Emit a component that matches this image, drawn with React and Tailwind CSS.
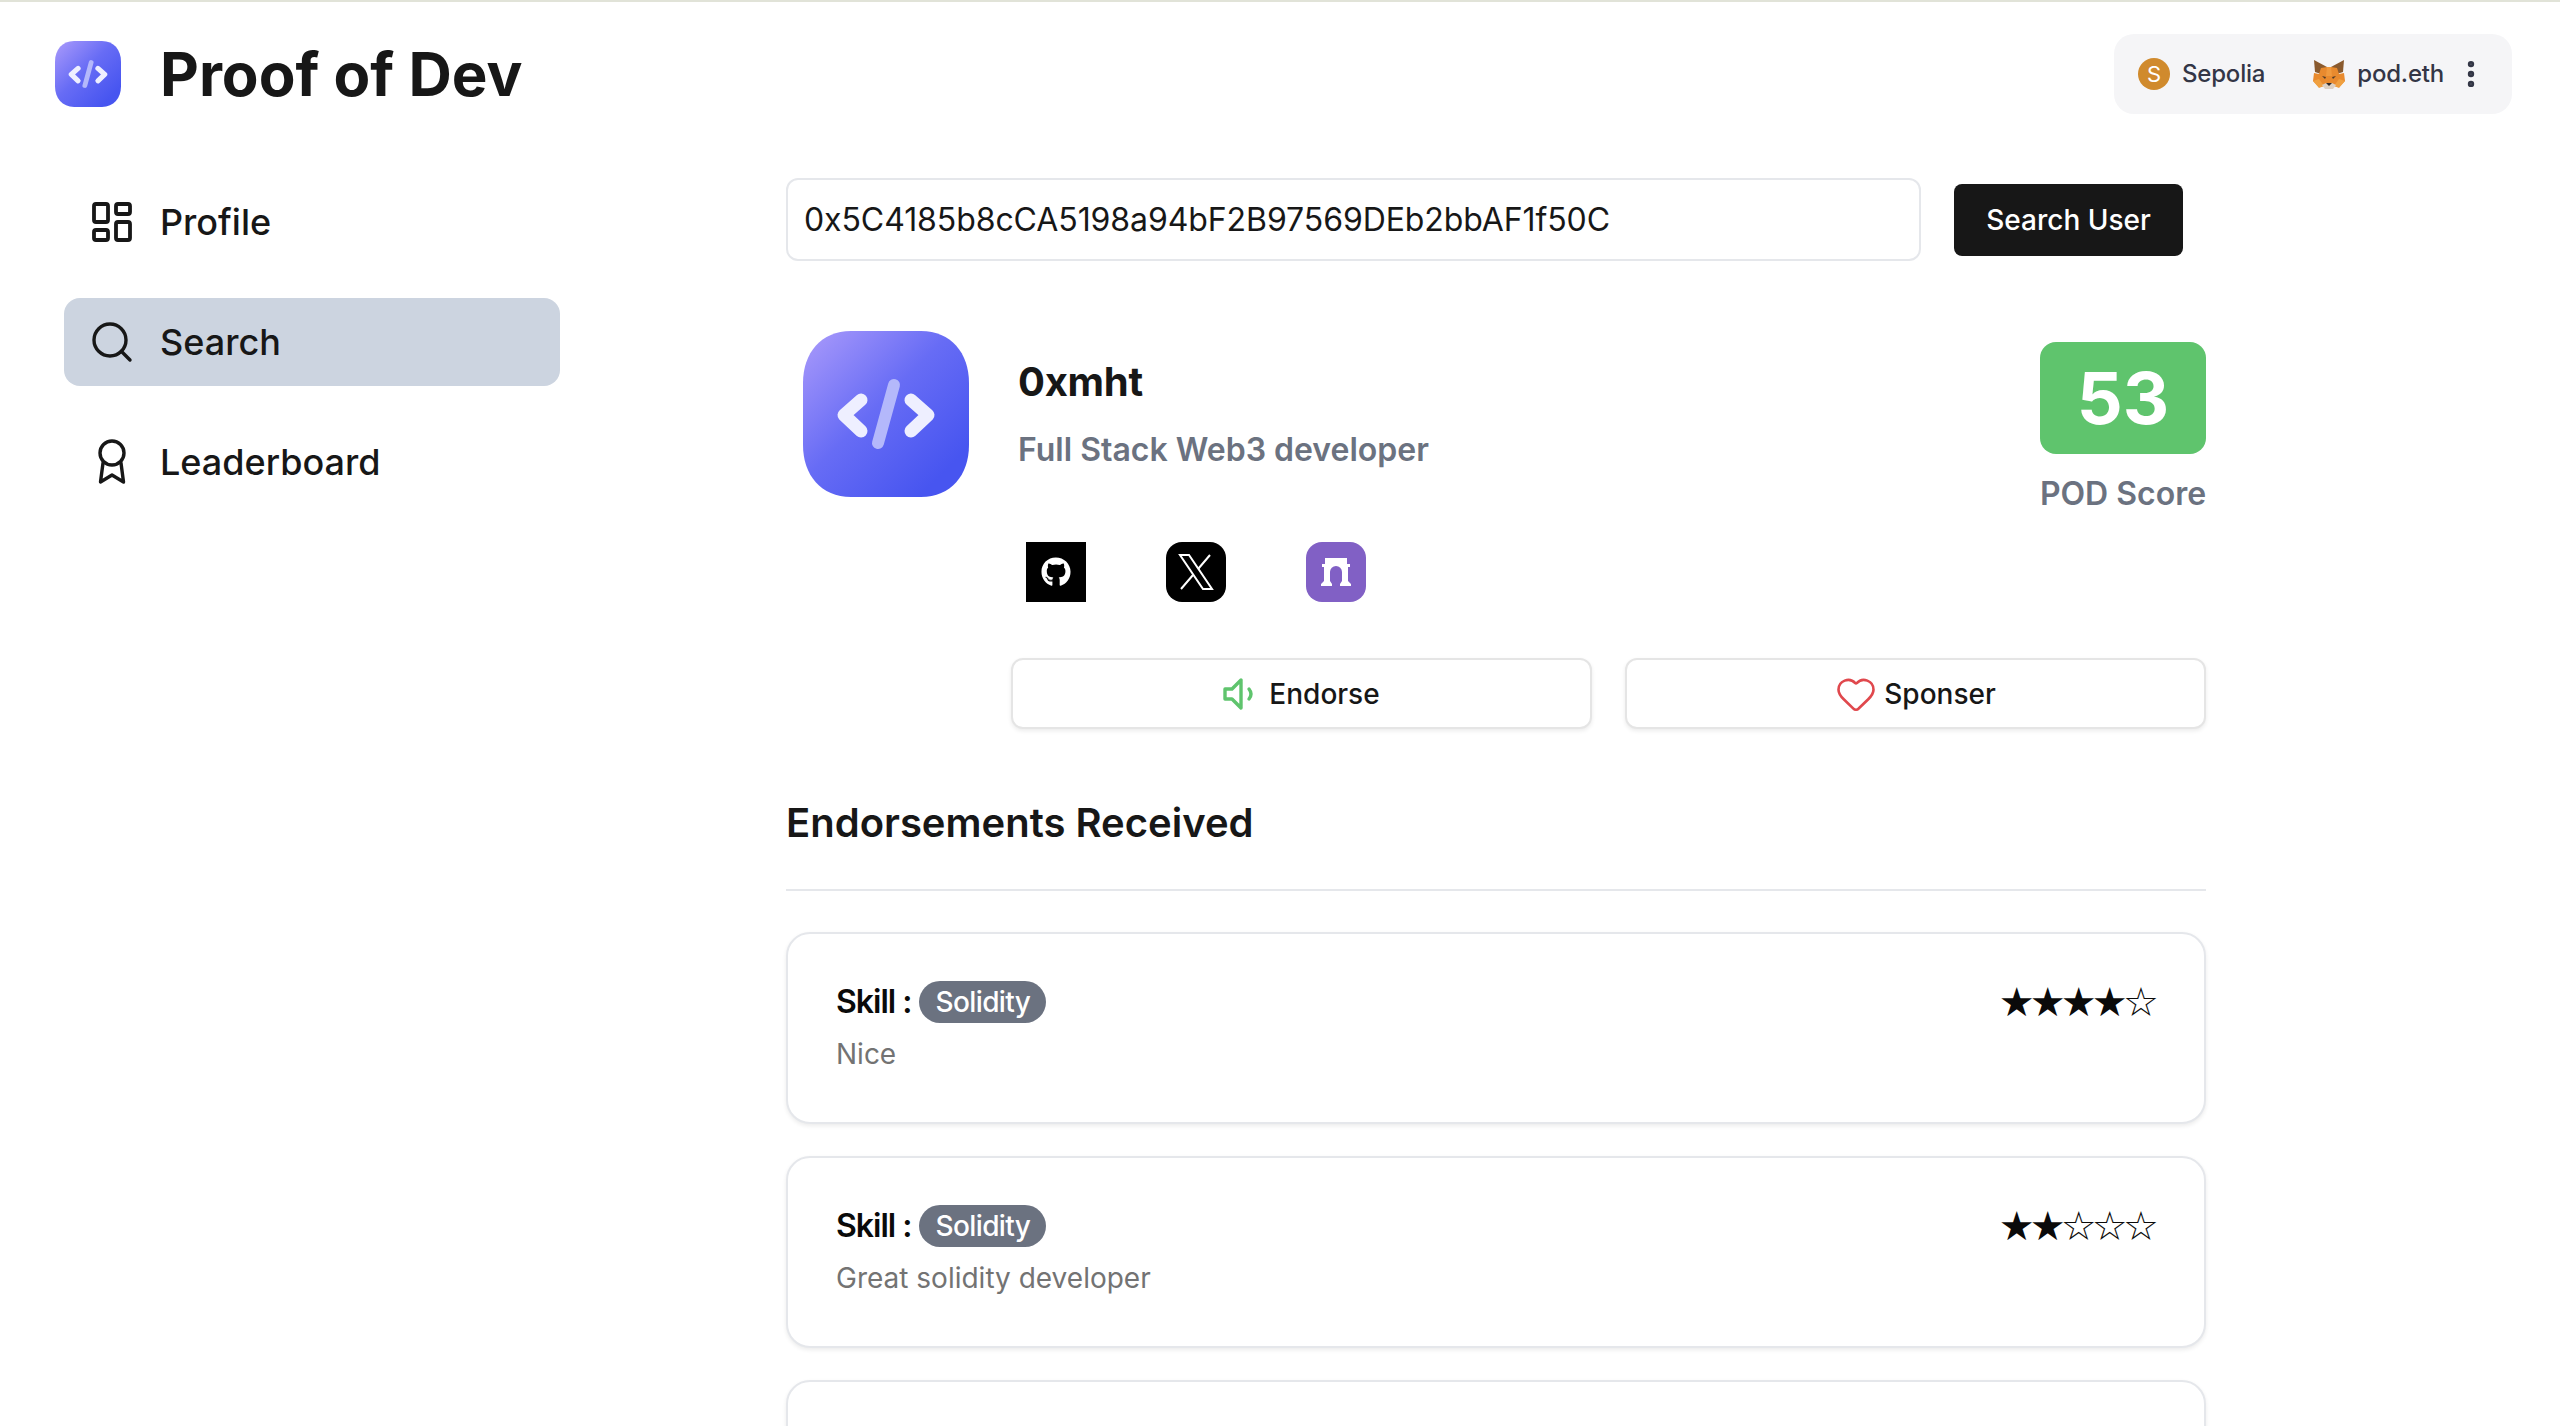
import { LayoutDashboard, Search, Heart, MoreVertical } from "lucide-react";
import { FaGithub } from "react-icons/fa";

const CodeLogo = ({ size, id }) => (
  <svg width={size} height={size} viewBox="0 0 166 166" className="shrink-0">
    <defs>
      <linearGradient id={id} x1="0" y1="0" x2="1" y2="1">
        <stop offset="0" stopColor="#ab9bfb" />
        <stop offset="0.45" stopColor="#676cf5" />
        <stop offset="0.85" stopColor="#4755f0" />
      </linearGradient>
    </defs>
    <path
      d="M48 0H118C148 0 166 22 166 52V114C166 144 148 166 118 166H48C18 166 0 144 0 114V52C0 22 18 0 48 0Z"
      fill={`url(#${id})`}
    />
    <path d="M58 69L41 84L58 100" fill="none" stroke="#eeefff" strokeWidth="13" strokeLinecap="round" strokeLinejoin="round" />
    <path d="M108 69L125 84L108 100" fill="none" stroke="#eeefff" strokeWidth="13" strokeLinecap="round" strokeLinejoin="round" />
    <path d="M91 54L75 112" fill="none" stroke="#b4b8fb" strokeWidth="12" strokeLinecap="round" />
  </svg>
);

const AwardIcon = () => (
  <svg width="48" height="48" viewBox="0 0 48 48" fill="none" stroke="#171717" strokeWidth="3.4" strokeLinecap="round" strokeLinejoin="round">
    <circle cx="24" cy="15" r="12" />
    <path d="M15 25L12.5 44L24 37L35.5 44L33 25" />
  </svg>
);

const Fox = () => (
  <svg width="32" height="31" viewBox="0 0 32 31" className="shrink-0">
    <polygon points="1,1 14,8 8,15 2,13" fill="#8a5a2e" />
    <polygon points="31,1 18,8 24,15 30,13" fill="#8a5a2e" />
    <polygon points="8,9 14,8 18,8 24,9 26,15 31,14 32,22 26,28 21,27 11,27 6,28 0,22 1,14 6,15" fill="#e88a2e" />
    <polygon points="14,8 18,8 19,17 13,17" fill="#f09a3e" />
    <polygon points="0,22 6,20 11,27 6,29" fill="#f0a040" />
    <polygon points="32,22 26,20 21,27 26,29" fill="#f0a040" />
    <polygon points="9,26 13,24 19,24 23,26 20,30 12,30" fill="#ddd0c2" />
    <polygon points="13,24 19,24 16,27" fill="#2f2a2a" />
    <polygon points="9,17 13,18 12,20" fill="#4b3a2a" />
    <polygon points="23,17 19,18 20,20" fill="#4b3a2a" />
  </svg>
);

const NavItem = ({ icon, label, active }) => (
  <div className={`flex items-center gap-6 h-[88px] px-6 rounded-2xl ${active ? "bg-[#ccd4e0]" : ""}`}>
    {icon}
    <span className="text-[36px] font-medium text-[#171717]">{label}</span>
  </div>
);

const ActionButton = ({ icon, label }) => (
  <button className="flex-1 h-[71px] flex items-center justify-center gap-2 bg-white border-2 border-[#e5e5e5] rounded-xl shadow-[0_2px_4px_rgba(0,0,0,0.08)] text-[28px] font-medium text-[#171717]">
    {icon}
    {label}
  </button>
);

const EndorsementCard = ({ text, stars }) => (
  <div className="h-[192px] shrink-0 border-2 border-[#e5e7eb] rounded-3xl shadow-[0_2px_4px_rgba(0,0,0,0.08)] px-12 pt-[47px] flex justify-between bg-white">
    <div>
      <div className="flex items-center gap-2 h-[42px]">
        <span className="text-[32px] font-semibold tracking-[-1px] text-[#0a0a0a]">Skill :</span>
        <span className="h-[42px] px-4 rounded-full bg-[#6b7280] text-white text-[28px] font-medium tracking-[-0.6px] flex items-center">Solidity</span>
      </div>
      <p className="mt-[11px] text-[28px] leading-10 text-[#737373]">{text}</p>
    </div>
    <div className="h-[42px] mr-[2px] flex items-center text-[40px] leading-none tracking-[-4.8px] text-[#0a0a0a] font-['DejaVu_Sans',sans-serif]">
      {stars}
    </div>
  </div>
);

export default function App() {
  return (
    <div className="h-[1426px] overflow-hidden bg-white font-['Inter',sans-serif] text-[#171717]">
      <header className="h-[146px] border-t-2 border-[#e1e3d8] flex items-center justify-between pl-[55px] pr-12">
        <div className="flex items-center gap-[39px]">
          <CodeLogo size={66} id="logo-small" />
          <h1 className="text-[60px] font-bold">Proof of Dev</h1>
        </div>
        <div className="w-[398px] h-20 rounded-[20px] bg-[#f5f5f7] flex items-center pl-6 text-[24px] font-medium tracking-[-0.2px] text-[#333646]">
          <span className="w-8 h-8 rounded-full bg-[#d08a2d] text-white text-[22px] font-normal flex items-center justify-center">S</span>
          <span className="ml-3">Sepolia</span>
          <span className="ml-[48px]"><Fox /></span>
          <span className="ml-3">pod.eth</span>
          <MoreVertical size={34} strokeWidth={2.5} className="ml-[10px] text-[#333646]" />
        </div>
      </header>

      <div className="flex">
        <aside className="ml-16 w-[496px] shrink-0 pt-8 flex flex-col gap-8">
          <NavItem label="Profile" icon={<LayoutDashboard size={48} strokeWidth={1.9} />} />
          <NavItem active label="Search" icon={<Search size={48} strokeWidth={1.7} />} />
          <NavItem label="Leaderboard" icon={<AwardIcon />} />
        </aside>

        <main className="ml-[226px] w-[1420px] pt-8 flex flex-col">
          <div className="flex items-center gap-[33px]">
            <input
              readOnly
              value="0x5C4185b8cCA5198a94bF2B97569DEb2bbAF1f50C"
              className="w-[1135px] h-[83px] px-4 border-2 border-[#e5e7eb] rounded-xl text-[32px] tracking-[-0.08px] text-[#171717] outline-none"
            />
            <button className="w-[229px] h-[72px] bg-[#171717] rounded-lg text-white text-[28px] font-medium">Search User</button>
          </div>

          <section className="mt-[70px] flex">
            <div className="ml-[17px] w-[208px] shrink-0">
              <CodeLogo size={166} id="logo-large" />
            </div>
            <div className="flex-1">
              <div className="flex justify-between">
                <div className="ml-[7px] pt-[27px]">
                  <h2 className="text-[40px] leading-[48px] font-bold tracking-[-0.3px]">0xmht</h2>
                  <p className="mt-5 text-[32px] leading-[48px] font-semibold text-[#6b7280]">Full Stack Web3 developer</p>
                </div>
                <div className="pt-[11px] flex flex-col items-center w-[166px]">
                  <div className="w-[166px] h-[112px] rounded-2xl bg-[#5fc46d] text-white text-[72px] font-bold flex items-center justify-center">53</div>
                  <p className="mt-5 text-[32px] leading-10 font-semibold text-[#6b7280] whitespace-nowrap">POD Score</p>
                </div>
              </div>
              <div className="mt-7 ml-[15px] flex gap-20">
                <div className="w-[60px] h-[60px] bg-black flex items-center justify-center text-white">
                  <FaGithub size={30} />
                </div>
                <div className="w-[60px] h-[60px] bg-black rounded-2xl flex items-center justify-center">
                  <svg width="36" height="38" viewBox="0 0 36 38" fill="none" stroke="#fff" strokeWidth="2" strokeLinejoin="miter">
                    <path d="M2 2H11L34 36H25Z" />
                    <path d="M32 2L20.5 15.5M15 22L3 36" />
                  </svg>
                </div>
                <div className="w-[60px] h-[60px] bg-[#8160c5] rounded-2xl flex items-center justify-center">
                  <svg width="32" height="30" viewBox="0 0 32 30" fill="#fff">
                    <path d="M5 1H27V7H30V10H28V24L31 27V29H20V27L22 24V15A6 6 0 0 0 10 15V24L12 27V29H1V27L4 24V10H2V7H5Z" />
                  </svg>
                </div>
              </div>
              <div className="mt-14 flex gap-[33px]">
                <ActionButton
                  label="Endorse"
                  icon={
                    <svg width="38" height="32" viewBox="0 0 38 32" fill="none" stroke="#5fc46d" strokeWidth="3.4" strokeLinejoin="round" strokeLinecap="round">
                      <path d="M2 11H9L18 2V30L9 21H2Z" />
                      <path d="M26 11Q30 16 26 21" />
                    </svg>
                  }
                />
                <ActionButton label="Sponser" icon={<Heart size={42} strokeWidth={1.5} className="text-[#e0484d] -mr-px" />} />
              </div>
            </div>
          </section>

          <h3 className="mt-[70px] text-[40px] leading-[48px] font-semibold">Endorsements Received</h3>
          <div className="mt-[42px] h-[2px] bg-[#e5e7eb]" />

          <div className="mt-[41px] flex flex-col gap-8">
            <EndorsementCard text="Nice" stars="★★★★☆" />
            <EndorsementCard text="Great solidity developer" stars="★★☆☆☆" />
            <div className="h-[192px] shrink-0 border-2 border-[#e5e7eb] rounded-3xl shadow-[0_2px_4px_rgba(0,0,0,0.08)] bg-white" />
          </div>
        </main>
      </div>
    </div>
  );
}
